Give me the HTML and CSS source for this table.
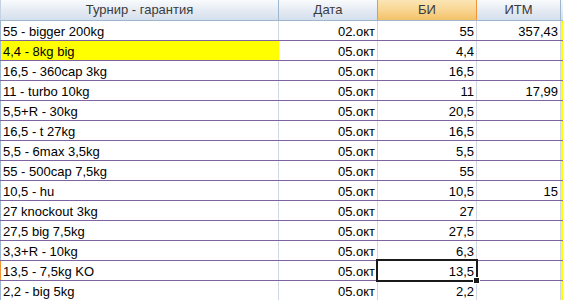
FILE: index.html
```html
<!DOCTYPE html>
<html lang="ru">
<head>
<meta charset="utf-8">
<title>Турниры</title>
<link rel="stylesheet" href="styles.css">
</head>
<body>
<div class="sheet">
  <div class="row head">
    <div class="edge"></div>
    <div class="c hc">Турнир - гарантия</div>
    <div class="c hc">Дата</div>
    <div class="c hc sel">БИ</div>
    <div class="c hc">ИТМ</div>
    <div class="c hc e"></div>
  </div>
  <div class="row"><div class="edge"></div><div class="c a">55 - bigger 200kg</div><div class="c r">02.окт</div><div class="c r">55</div><div class="c r">357,43</div><div class="c y"></div></div>
  <div class="row"><div class="edge"></div><div class="c a hl">4,4 - 8kg big</div><div class="c r">05.окт</div><div class="c r">4,4</div><div class="c r"></div><div class="c y"></div></div>
  <div class="row"><div class="edge"></div><div class="c a">16,5 - 360cap 3kg</div><div class="c r">05.окт</div><div class="c r">16,5</div><div class="c r"></div><div class="c y"></div></div>
  <div class="row"><div class="edge"></div><div class="c a">11 - turbo 10kg</div><div class="c r">05.окт</div><div class="c r">11</div><div class="c r">17,99</div><div class="c y"></div></div>
  <div class="row"><div class="edge"></div><div class="c a">5,5+R - 30kg</div><div class="c r">05.окт</div><div class="c r">20,5</div><div class="c r"></div><div class="c y"></div></div>
  <div class="row"><div class="edge"></div><div class="c a">16,5 - t 27kg</div><div class="c r">05.окт</div><div class="c r">16,5</div><div class="c r"></div><div class="c y"></div></div>
  <div class="row"><div class="edge"></div><div class="c a">5,5 - 6max 3,5kg</div><div class="c r">05.окт</div><div class="c r">5,5</div><div class="c r"></div><div class="c y"></div></div>
  <div class="row"><div class="edge"></div><div class="c a">55 - 500cap 7,5kg</div><div class="c r">05.окт</div><div class="c r">55</div><div class="c r"></div><div class="c y"></div></div>
  <div class="row"><div class="edge"></div><div class="c a">10,5 - hu</div><div class="c r">05.окт</div><div class="c r">10,5</div><div class="c r">15</div><div class="c y"></div></div>
  <div class="row"><div class="edge"></div><div class="c a">27 knockout 3kg</div><div class="c r">05.окт</div><div class="c r">27</div><div class="c r"></div><div class="c y"></div></div>
  <div class="row"><div class="edge"></div><div class="c a">27,5 big 7,5kg</div><div class="c r">05.окт</div><div class="c r">27,5</div><div class="c r"></div><div class="c y"></div></div>
  <div class="row"><div class="edge"></div><div class="c a">3,3+R - 10kg</div><div class="c r">05.окт</div><div class="c r">6,3</div><div class="c r"></div><div class="c y"></div></div>
  <div class="row"><div class="edge active"></div><div class="c a">13,5 - 7,5kg KO</div><div class="c r">05.окт</div><div class="c r cur">13,5<span class="frame"></span><span class="handle"></span></div><div class="c r"></div><div class="c y"></div></div>
  <div class="row"><div class="edge"></div><div class="c a">2,2 - big 5kg</div><div class="c r">05.окт</div><div class="c r">2,2</div><div class="c r"></div><div class="c y"></div></div>
</div>
</body>
</html>
```

FILE: styles.css
```css
html, body {
  margin: 0;
  padding: 0;
  background: #ffffff;
}
body {
  width: 563px;
  height: 300px;
  overflow: hidden;
  font-family: "Liberation Sans", Arial, sans-serif;
  font-size: 13px;
  color: #000;
}
.sheet {
  display: flex;
  flex-direction: column;
}
.row {
  box-sizing: border-box;
  display: grid;
  grid-template-columns: 1px 278px 99px 99px 84px 2px;
  height: 20px;
  border-bottom: 1px solid #8064a2;
}
.row.head {
  height: 21px;
  border-bottom: 1px solid #9eb6ce;
}
.c {
  box-sizing: border-box;
  border-right: 1px solid #d0d7e5;
  padding: 2px 2px 0 2px;
  line-height: 17px;
  white-space: nowrap;
}
.edge {
  background: #9eb6ce;
}
.edge.active {
  background: #f29536;
}
.head .edge {
  background: #c5d2e2;
}
.hc {
  background: linear-gradient(#f9fbfd, #e4eaf3 55%, #d4dfed);
  border-right: 1px solid #9eb6ce;
  text-align: center;
  color: #3b3b3b;
  padding-top: 1px;
}
.hc.sel {
  background: linear-gradient(#fbe5b5, #f8d48f 55%, #f3c168);
  border-right-color: #f29536;
  border-left: 1px solid #f29536;
  margin-left: -1px;
}
.hc.e {
  border-right: none;
}
.a {
  text-align: left;
}
.r {
  text-align: right;
}
.hl {
  background: #ffff00;
  border-right-color: #ffff00;
}
.y {
  background: #ffff00;
  border-right: none;
}
.cur {
  position: relative;
}
.frame {
  position: absolute;
  left: -2px;
  top: -2px;
  right: -2px;
  bottom: -2px;
  border: 2px solid #1a1a1a;
  pointer-events: none;
}
.handle {
  position: absolute;
  right: -4px;
  bottom: -4px;
  width: 5px;
  height: 5px;
  background: #1a1a1a;
  border: 1px solid #fff;
  box-sizing: content-box;
}
```
